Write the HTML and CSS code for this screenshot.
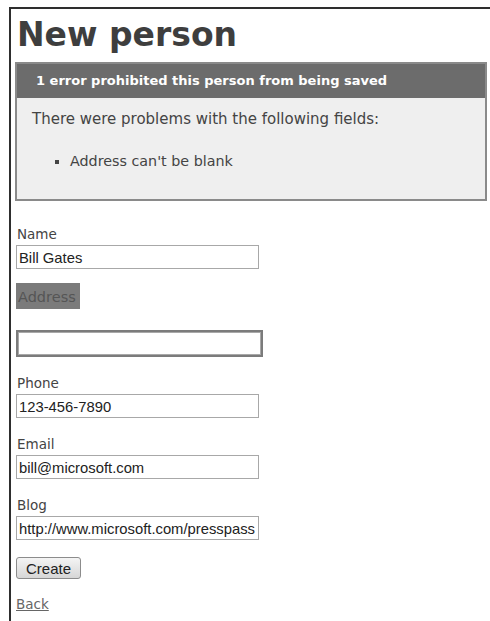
FILE: index.html
```html
<!DOCTYPE html>
<html>
<head>
<meta charset="utf-8">
<title>People: new</title>
<link rel="stylesheet" href="styles.css">
</head>
<body>
<div class="frame">
  <h1 class="title">New person</h1>

  <div class="error-explanation">
    <h2 class="error-head">1 error prohibited this person from being saved</h2>
    <p class="error-intro">There were problems with the following fields:</p>
    <ul class="error-list">
      <li>Address can't be blank</li>
    </ul>
  </div>

  <form class="person-form">
    <div class="field field-first">
      <label class="field-label" for="person_name">Name</label>
      <input class="text-input" id="person_name" type="text" value="Bill Gates">
    </div>

    <div class="field field-error">
      <div class="error-wrap label-wrap"><label class="field-label" for="person_address">Address</label></div>
      <div class="error-wrap input-wrap"><input class="text-input" id="person_address" type="text" value=""></div>
    </div>

    <div class="field">
      <label class="field-label" for="person_phone">Phone</label>
      <input class="text-input" id="person_phone" type="text" value="123-456-7890">
    </div>

    <div class="field">
      <label class="field-label" for="person_email">Email</label>
      <input class="text-input" id="person_email" type="text" value="bill@microsoft.com">
    </div>

    <div class="field">
      <label class="field-label" for="person_blog">Blog</label>
      <input class="text-input" id="person_blog" type="text" value="http://www.microsoft.com/presspass">
    </div>

    <div class="actions">
      <button class="submit" type="button">Create</button>
    </div>
  </form>

  <a class="back-link" href="#">Back</a>
</div>
</body>
</html>
```

FILE: styles.css
```css
html, body {
  margin: 0;
  padding: 0;
  background: #fff;
  height: 100%;
  overflow: hidden;
}

body {
  color: #444;
  font-family: "DejaVu Sans", Verdana, sans-serif;
  font-size: 13.5px;
  line-height: 18px;
}

.frame {
  margin: 7px 0 0 9px;
  border-top: 2px solid #2e2e2e;
  border-left: 2px solid #2e2e2e;
  padding: 0 3px 0 4px;
  min-height: 100%;
  box-sizing: border-box;
}

.title {
  margin: 7px 0 8px 2px;
  font-size: 33px;
  line-height: 38px;
  font-weight: bold;
  color: #3e3e3e;
}

.error-explanation {
  border: 2px solid #8a8a8a;
  background: #efefef;
  padding-bottom: 10px;
}

.error-head {
  margin: 0;
  height: 34px;
  box-sizing: border-box;
  padding: 0 0 0 19px;
  background: #6c6c6c;
  color: #fff;
  font-size: 13px;
  line-height: 34px;
  font-weight: bold;
}

.error-intro {
  margin: 0;
  padding: 12px 0 0 15px;
  color: #444;
  font-size: 15px;
}

.error-list {
  margin: 23px 0 0 0;
  padding: 0 0 0 53px;
  list-style: square;
  color: #444;
  font-size: 14.3px;
  line-height: 20px;
  min-height: 38px;
}

.person-form {
  margin: 24px 0 0 1px;
}

.field {
  display: flex;
  flex-direction: column;
  align-items: flex-start;
  margin-bottom: 17px;
}

.field-first {
  margin-bottom: 14px;
}

.field-label {
  display: block;
  margin-left: 1px;
  margin-bottom: 2px;
  color: #444;
}

.text-input {
  width: 243px;
  height: 24px;
  box-sizing: border-box;
  margin: 0;
  padding: 1px 1px 0 2px;
  border: 1px solid #a8a8a8;
  background: #fff;
  color: #222;
  font-family: "Liberation Sans", Arial, sans-serif;
  font-size: 14.8px;
  outline: none;
}

.field-error {
  margin-bottom: 17px;
}

.error-wrap {
  background: #7b7b7b;
  padding: 2px;
}

.label-wrap {
  margin-bottom: 21px;
}

.label-wrap .field-label {
  margin: 0;
  padding: 3px 2px 1px 0;
  color: #555;
  font-size: 14.5px;
}

.input-wrap .text-input {
  height: 23px;
}

.submit {
  margin: 0;
  height: 22px;
  width: 65px;
  padding: 0;
  border: 1px solid #8c8c8c;
  border-radius: 3px;
  background: linear-gradient(#f4f4f4, #d6d6d6);
  color: #222;
  font-family: "Liberation Sans", Arial, sans-serif;
  font-size: 15px;
}

.back-link {
  display: inline-block;
  margin-top: 16px;
  margin-left: 1px;
  color: #666;
  text-decoration: underline;
}
```
